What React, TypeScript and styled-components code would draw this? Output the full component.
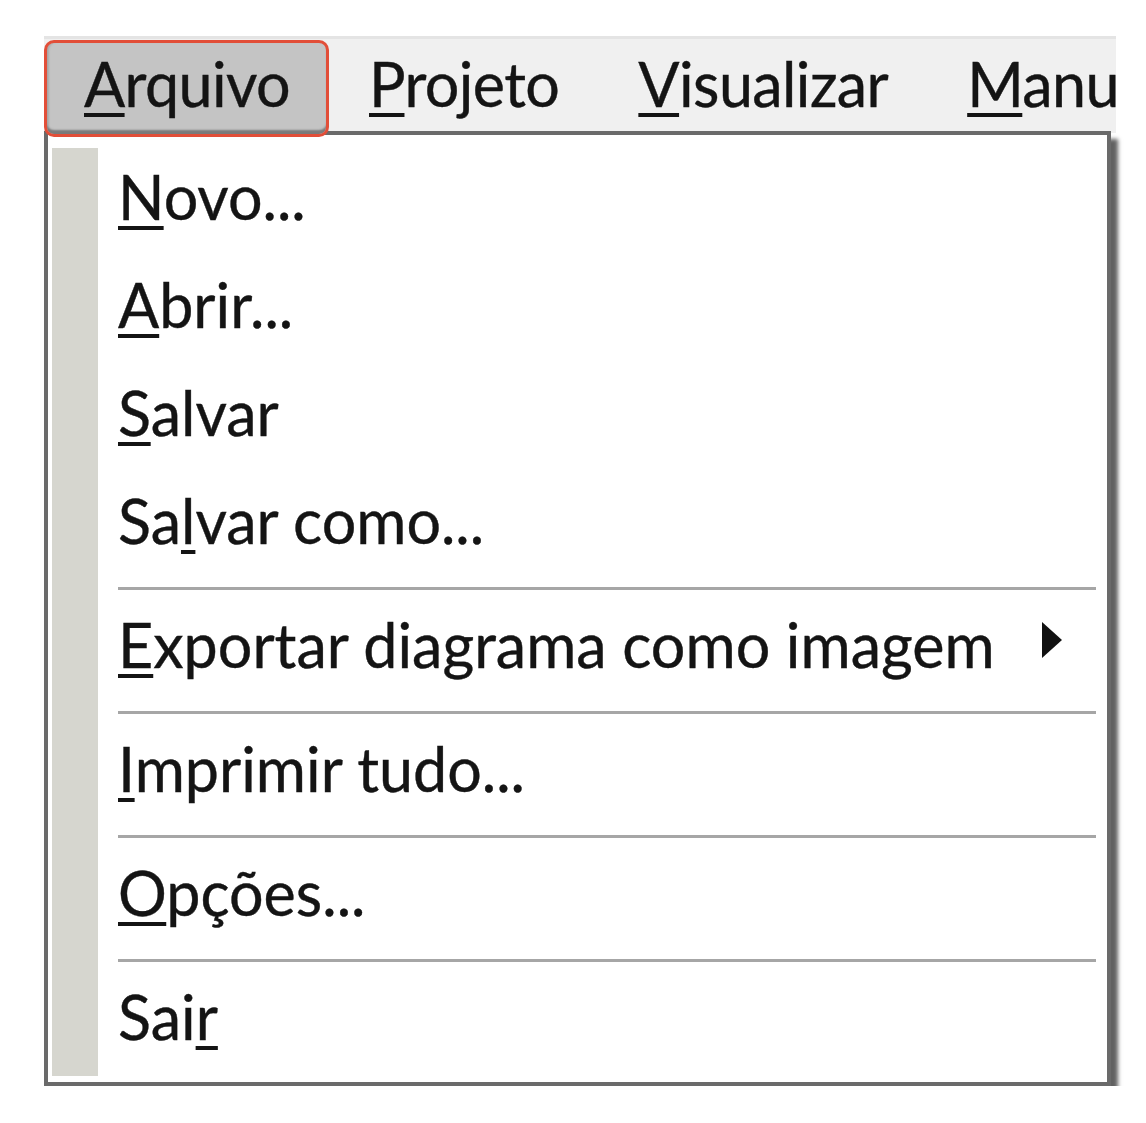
import React from 'react'
import styled, { createGlobalStyle } from 'styled-components'

const GlobalStyle = createGlobalStyle`
  html, body {
    margin: 0;
    padding: 0;
    background: #ffffff;
  }
  body {
    font-family: Lato, 'Open Sans', 'DejaVu Sans', sans-serif;
    color: #141414;
  }
`

type MenuEntry = { label: string; key: number; submenu?: boolean } | 'sep'

const barItems = [
  { label: 'Arquivo', key: 0, pressed: true },
  { label: 'Projeto', key: 0, pressed: false },
  { label: 'Visualizar', key: 0, pressed: false },
  { label: 'Manual', key: 0, pressed: false },
]

const entries: MenuEntry[] = [
  { label: 'Novo...', key: 0 },
  { label: 'Abrir...', key: 0 },
  { label: 'Salvar', key: 0 },
  { label: 'Salvar como...', key: 2 },
  'sep',
  { label: 'Exportar diagrama como imagem', key: 0, submenu: true },
  'sep',
  { label: 'Imprimir tudo...', key: 0 },
  'sep',
  { label: 'Opções...', key: 0 },
  'sep',
  { label: 'Sair', key: 3 },
]

const withKey = (label: string, key: number) => (
  <>
    {label.slice(0, key)}
    <AccessKey>{label[key]}</AccessKey>
    {label.slice(key + 1)}
  </>
)

const App = () => {
  return (
    <Page>
      <GlobalStyle />
      <MenuBar>
        {barItems.map((item) => (
          <BarItem key={item.label} pressed={item.pressed}>
            {withKey(item.label, item.key)}
          </BarItem>
        ))}
      </MenuBar>
      <Dropdown>
        <Gutter />
        <ItemList>
          {entries.map((entry, i) =>
            entry === 'sep' ? (
              <Separator key={i} />
            ) : (
              <Item key={i}>
                <span>{withKey(entry.label, entry.key)}</span>
                {entry.submenu && (
                  <Arrow width='22' height='38' viewBox='0 0 22 38'>
                    <polygon points='1,1 21,19 1,37' fill='#111' />
                  </Arrow>
                )}
              </Item>
            )
          )}
        </ItemList>
      </Dropdown>
    </Page>
  )
}

const Page = styled.div`
  padding: 36px 0 0 44px;
  display: flex;
  flex-direction: column;
  align-items: flex-start;
`

const MenuBar = styled.div`
  box-sizing: border-box;
  width: 1072px;
  height: 97px;
  padding-top: 1px;
  border-top: 3px solid #e4e4e4;
  background: #f0f0f0;
  display: flex;
  align-items: flex-start;
  overflow-x: clip;
  overflow-y: visible;
`

interface BarItemProps {
  pressed: boolean
}

const BarItem = styled.div<BarItemProps>`
  position: relative;
  z-index: 2;
  flex: none;
  box-sizing: border-box;
  height: 97px;
  padding: 4px 36px 0 37px;
  border: 3px solid ${({ pressed }) => (pressed ? '#e24e38' : 'transparent')};
  border-radius: 10px;
  background: ${({ pressed }) => (pressed ? '#c4c4c4' : 'transparent')};
  box-shadow: ${({ pressed }) =>
    pressed ? 'inset 0 -5px 2px -1px #7a7a7a, inset 3px 0 2px -1px #a9a9a9' : 'none'};
  font-size: 61px;
  line-height: 74px;
  letter-spacing: -0.6px;
  white-space: nowrap;
  -webkit-text-stroke: 0.4px #141414;
`

const AccessKey = styled.span`
  text-decoration: underline;
  text-decoration-thickness: 4px;
  text-underline-offset: 6px;
`

const Dropdown = styled.div`
  box-sizing: border-box;
  width: 1067px;
  margin-top: -2px;
  padding: 13px 4px 6px 4px;
  border: 4px solid #6a6a6a;
  background: #ffffff;
  box-shadow: 7px 8px 4px rgba(0, 0, 0, 0.62);
  display: flex;
`

const Gutter = styled.div`
  width: 46px;
  flex: none;
  background: #d6d6cf;
`

const ItemList = styled.div`
  flex: 1;
  padding: 0 7px 0 20px;
  display: flex;
  flex-direction: column;
`

const Item = styled.div`
  box-sizing: border-box;
  height: 108px;
  padding: 0 33px 10px 0;
  display: flex;
  align-items: center;
  justify-content: space-between;
  font-size: 61px;
  line-height: 74px;
  white-space: nowrap;
  -webkit-text-stroke: 0.4px #141414;
`

const Arrow = styled.svg`
  flex: none;
  margin-bottom: 10px;
`

const Separator = styled.div`
  height: 16px;
  display: flex;
  align-items: center;

  &::before {
    content: '';
    flex: 1;
    height: 3px;
    background: #a6a6a6;
  }
`

export default App
